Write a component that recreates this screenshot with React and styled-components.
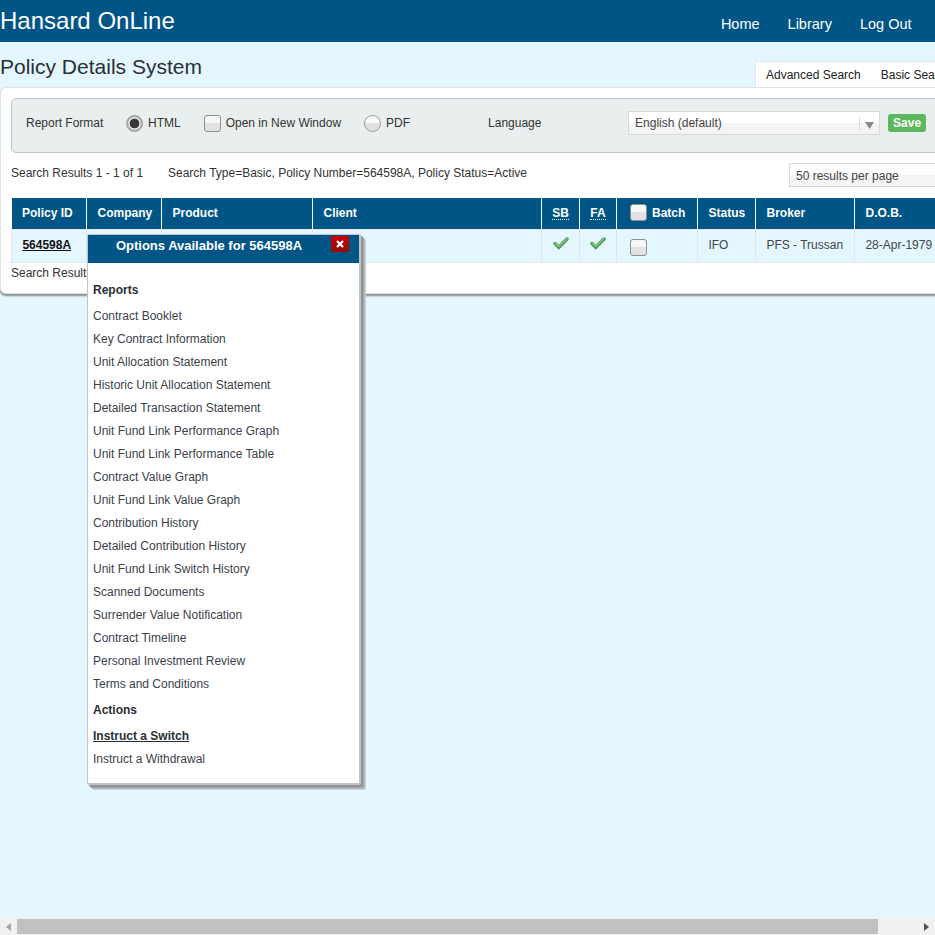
import React from 'react';
import styled, { createGlobalStyle } from 'styled-components';

const GlobalStyle = createGlobalStyle`
  html, body {
    margin: 0;
    padding: 0;
    height: 100%;
    overflow: hidden;
    background: #e4f6ff;
  }
  body {
    font-family: "Liberation Sans", Arial, sans-serif;
    font-size: 12px;
    color: #333;
  }
`;

const reports = [
  'Contract Booklet',
  'Key Contract Information',
  'Unit Allocation Statement',
  'Historic Unit Allocation Statement',
  'Detailed Transaction Statement',
  'Unit Fund Link Performance Graph',
  'Unit Fund Link Performance Table',
  'Contract Value Graph',
  'Unit Fund Link Value Graph',
  'Contribution History',
  'Detailed Contribution History',
  'Unit Fund Link Switch History',
  'Scanned Documents',
  'Surrender Value Notification',
  'Contract Timeline',
  'Personal Investment Review',
  'Terms and Conditions',
];

const Check = () => (
  <CheckIcon width="16" height="13" viewBox="0 0 16 13">
    <path d="M2 6.5L5.8 10.3L14 2" fill="none" stroke="#4b9a4f" strokeWidth="3.4" strokeLinecap="round" />
    <path d="M2.2 6.3L5.8 9.6L13.8 1.8" fill="none" stroke="#80c884" strokeWidth="1.4" strokeLinecap="round" />
  </CheckIcon>
);

const App = () => {
  return (
    <Viewport>
      <GlobalStyle />
      <Page>
        <Header>
          <Brand>Hansard OnLine</Brand>
          <Nav>
            <NavLink>Home</NavLink>
            <NavLink>Library</NavLink>
            <NavLink>Log Out</NavLink>
          </Nav>
        </Header>
        <TitleRow>
          <Title>Policy Details System</Title>
          <Tabs>
            <Tab>Advanced Search</Tab>
            <Tab>Basic Search</Tab>
          </Tabs>
        </TitleRow>
        <Panel>
          <FormatBar>
            <FormatLabel>Report Format</FormatLabel>
            <Radio $checked />
            <OptionLabel $gap="23px">HTML</OptionLabel>
            <FormCheckbox />
            <OptionLabel $gap="23px">Open in New Window</OptionLabel>
            <Radio />
            <OptionLabel $gap="78px">PDF</OptionLabel>
            <FormatLabel $width="140px">Language</FormatLabel>
            <LanguageSelect>
              English (default)
              <SelectArrow>
                <svg width="9" height="7" viewBox="0 0 9 7"><path d="M0 0H9L4.5 7Z" fill="#888" /></svg>
              </SelectArrow>
            </LanguageSelect>
            <SaveButton>Save</SaveButton>
          </FormatBar>
          <ResultsBar>
            <ResultText $width="157px">Search Results 1 - 1 of 1</ResultText>
            <ResultText $width="621px">Search Type=Basic, Policy Number=564598A, Policy Status=Active</ResultText>
            <PerPage>50 results per page</PerPage>
          </ResultsBar>
          <Table>
            <colgroup>
              <col width="75" />
              <col width="75" />
              <col width="151" />
              <col width="229" />
              <col width="38" />
              <col width="37" />
              <col width="81" />
              <col width="58" />
              <col width="99" />
              <col width="100" />
            </colgroup>
            <thead>
              <tr>
                <Th>Policy ID</Th>
                <Th>Company</Th>
                <Th>Product</Th>
                <Th>Client</Th>
                <Th $center><Abbr>SB</Abbr></Th>
                <Th $center><Abbr>FA</Abbr></Th>
                <Th $batch><HeaderBox />Batch</Th>
                <Th>Status</Th>
                <Th>Broker</Th>
                <Th>D.O.B.</Th>
              </tr>
            </thead>
            <tbody>
              <tr>
                <Td><PolicyLink>564598A</PolicyLink></Td>
                <Td />
                <Td />
                <Td />
                <Td $center><Check /></Td>
                <Td $center><Check /></Td>
                <Td $batch><RowBox /></Td>
                <Td>IFO</Td>
                <Td>PFS - Trussan</Td>
                <Td>28-Apr-1979</Td>
              </tr>
            </tbody>
          </Table>
          <Footnote>Search Results 1 - 1 of 1</Footnote>
        </Panel>
        <Popup>
          <PopupHead>
            Options Available for 564598A
            <CloseButton>
              <svg width="8" height="8" viewBox="0 0 8 8"><path d="M1 1L7 7M7 1L1 7" stroke="#fff" strokeWidth="2.2" /></svg>
            </CloseButton>
          </PopupHead>
          <PopupBody>
            <SectionTitle>Reports</SectionTitle>
            {reports.map((r) => <MenuItem key={r}>{r}</MenuItem>)}
            <SectionTitle $tight>Actions</SectionTitle>
            <MenuItem $active>Instruct a Switch</MenuItem>
            <MenuItem>Instruct a Withdrawal</MenuItem>
          </PopupBody>
        </Popup>
      </Page>
      <ScrollBar>
        <ScrollButton>
          <svg width="5" height="8" viewBox="0 0 5 8"><path d="M5 0V8L0 4Z" fill="#a3a3a3" /></svg>
        </ScrollButton>
        <ScrollTrack>
          <ScrollThumb />
        </ScrollTrack>
        <ScrollButton>
          <svg width="5" height="8" viewBox="0 0 5 8"><path d="M0 0V8L5 4Z" fill="#505050" /></svg>
        </ScrollButton>
      </ScrollBar>
    </Viewport>
  );
};

const Viewport = styled.div`
  width: 935px;
  height: 935px;
  display: flex;
  flex-direction: column;
  overflow: hidden;
  background: #e4f6ff;
`;

const Page = styled.div`
  position: relative;
  flex: 1;
  width: 978px;
  min-height: 0;
`;

const Header = styled.header`
  height: 42px;
  background: #005587;
  display: flex;
  justify-content: space-between;
  width: 935px;
  box-sizing: border-box;
  padding-right: 23.5px;
`;

const Brand = styled.div`
  font-size: 24px;
  line-height: 42px;
  color: #fff;
`;

const Nav = styled.nav`
  display: flex;
  gap: 28px;
  padding-top: 16px;
`;

const NavLink = styled.a`
  font-size: 14.5px;
  line-height: 16px;
  color: #fff;
`;

const TitleRow = styled.div`
  height: 45px;
  display: flex;
  justify-content: space-between;
`;

const Title = styled.h1`
  margin: 13px 0 0 0;
  font-size: 21px;
  line-height: 24px;
  font-weight: normal;
  color: #2a2f36;
`;

const Tabs = styled.div`
  display: flex;
  align-self: flex-end;
  width: 223px;
  height: 26px;
  box-sizing: border-box;
  background: #fff;
  border: 1px solid #e3e7e9;
  border-bottom: none;
  padding: 0 0 0 10px;
  gap: 20px;
  white-space: nowrap;
`;

const Tab = styled.span`
  font-size: 12px;
  line-height: 26px;
  color: #222;
`;

const Panel = styled.section`
  background: #fff;
  border: 1px solid #dfe3e5;
  border-radius: 6px;
  height: 207px;
  box-sizing: border-box;
  box-shadow: 0 2px 2px #8a8a8a;
  padding: 10px 0 0 10px;
`;

const FormatBar = styled.div`
  height: 55px;
  box-sizing: border-box;
  background: #e9eeee;
  border: 1px solid #bccacd;
  border-radius: 5px;
  display: flex;
  align-items: center;
  padding-left: 14px;
  padding-bottom: 5px;
`;

const FormatLabel = styled.span`
  width: ${(p) => p.$width || '100px'};
  color: #333;
`;

const OptionLabel = styled.span`
  margin-left: 5px;
  margin-right: ${(p) => p.$gap};
  color: #333;
`;

const Radio = styled.span`
  width: 17px;
  height: 17px;
  box-sizing: border-box;
  border-radius: 50%;
  border: 1px solid #9a9a9a;
  background: ${(p) =>
    p.$checked
      ? 'radial-gradient(circle, #3a3a3a 0 4.6px, #f0f0f0 5.2px 5.8px, #b4b4b4 6.4px)'
      : 'linear-gradient(#f8f8f8 50%, #e2e2e2 50%)'};
`;

const Checkbox = styled.span`
  display: inline-block;
  width: 17px;
  height: 17px;
  box-sizing: border-box;
  border-radius: 3px;
  border: 1px solid #8f8f8f;
  background: linear-gradient(#f6f6f6 50%, #e2e2e2 50%);
`;

const FormCheckbox = styled(Checkbox)`
  flex: none;
`;

const LanguageSelect = styled.div`
  position: relative;
  width: 252px;
  height: 24px;
  box-sizing: border-box;
  border: 1px solid #d6dadb;
  background: linear-gradient(#fff 50%, #f4f4f4 50%);
  padding-left: 6px;
  line-height: 22px;
  color: #444;
`;

const SelectArrow = styled.span`
  position: absolute;
  right: 0;
  top: 5px;
  width: 19px;
  height: 12px;
  border-left: 1px solid #ddd;
  display: flex;
  justify-content: center;
  align-items: center;
  padding-top: 2px;
`;

const SaveButton = styled.button`
  margin-left: 8px;
  width: 38px;
  height: 18px;
  padding: 0;
  border: none;
  border-radius: 3px;
  background: #5cb85c;
  color: #fff;
  font: bold 12px "Liberation Sans", Arial, sans-serif;
`;

const ResultsBar = styled.div`
  height: 45px;
  display: flex;
  padding-top: 13px;
  box-sizing: border-box;
`;

const ResultText = styled.span`
  width: ${(p) => p.$width};
  line-height: 14px;
  color: #333;
`;

const PerPage = styled.div`
  width: 170px;
  height: 24px;
  box-sizing: border-box;
  margin-top: -3px;
  border: 1px solid #d6dadb;
  background: linear-gradient(#fff 50%, #f4f4f4 50%);
  padding-left: 6px;
  line-height: 24px;
  color: #444;
`;

const Table = styled.table`
  table-layout: fixed;
  border-collapse: collapse;
  width: 943px;
`;

const Th = styled.th`
  height: 31px;
  box-sizing: border-box;
  padding: 0 0 1px ${(p) => (p.$center ? '0' : p.$batch ? '13px' : '10.5px')};
  background: #005587;
  border-left: 1px solid #fff;
  color: #fff;
  font-size: 12px;
  font-weight: bold;
  text-align: ${(p) => (p.$center ? 'center' : 'left')};
  white-space: nowrap;
  &:first-child {
    border-left: none;
  }
`;

const HeaderBox = styled(Checkbox)`
  margin-right: 5px;
  vertical-align: -4px;
`;

const RowBox = styled(Checkbox)`
  display: block;
  margin-top: 5px;
`;

const Abbr = styled.span`
  border-bottom: 1px dotted #fff;
  line-height: 12px;
  display: inline-block;
`;

const CheckIcon = styled.svg`
  display: block;
  margin: 0 auto 3px;
`;

const Td = styled.td`
  height: 33px;
  box-sizing: border-box;
  padding: 0 0 2px ${(p) => (p.$center ? '0' : p.$batch ? '13px' : '10.4px')};
  background: #e4f6ff;
  border: 1px solid #e0e6ea;
  color: #444;
  text-align: ${(p) => (p.$center ? 'center' : 'left')};
  white-space: nowrap;
  vertical-align: middle;
`;

const PolicyLink = styled.a`
  font-weight: bold;
  color: #111;
  text-decoration: underline;
`;

const Footnote = styled.div`
  margin-top: 3px;
  line-height: 14px;
  color: #333;
`;

const Popup = styled.aside`
  position: absolute;
  left: 87px;
  top: 234px;
  width: 274px;
  height: 551px;
  box-sizing: border-box;
  background: #fff;
  border: 1px solid #c4c4c4;
  border-width: 1px 2px 2px 1px;
  border-radius: 2px;
  box-shadow: 2px 2px 0 #8f9497, 3px 3px 0 #9fa5a8, 4px 4px 0 #b4babd, 5px 5px 0 #ccd3d7;
`;

const PopupHead = styled.div`
  position: relative;
  height: 28px;
  background: #005587;
  color: #fff;
  font-size: 13px;
  font-weight: bold;
  text-align: center;
  line-height: 21px;
  padding-right: 29px;
`;

const CloseButton = styled.span`
  position: absolute;
  right: 10px;
  top: 1px;
  width: 18px;
  height: 16px;
  border-radius: 1px;
  background: linear-gradient(#cc0000, #8c0d0d);
  display: flex;
  align-items: center;
  justify-content: center;
`;

const PopupBody = styled.div`
  padding: 19px 5px 0;
`;

const SectionTitle = styled.h3`
  margin: ${(p) => (p.$tight ? '3px 0 10px' : '0 0 10px')};
  font-size: 12px;
  line-height: 16px;
  font-weight: bold;
  color: #2a2f36;
`;

const MenuItem = styled.div`
  height: 23px;
  line-height: 16px;
  color: ${(p) => (p.$active ? '#2a2f36' : '#3c3f4a')};
  font-weight: ${(p) => (p.$active ? 'bold' : 'normal')};
  text-decoration: ${(p) => (p.$active ? 'underline' : 'none')};
`;

const ScrollBar = styled.div`
  height: 17px;
  flex: none;
  display: flex;
  background: #f1f1f1;
`;

const ScrollButton = styled.div`
  width: 17px;
  display: flex;
  align-items: center;
  justify-content: center;
`;

const ScrollTrack = styled.div`
  flex: 1;
  padding: 1px 0;
`;

const ScrollThumb = styled.div`
  width: 861px;
  height: 15px;
  background: #c1c1c1;
`;

export default App;
